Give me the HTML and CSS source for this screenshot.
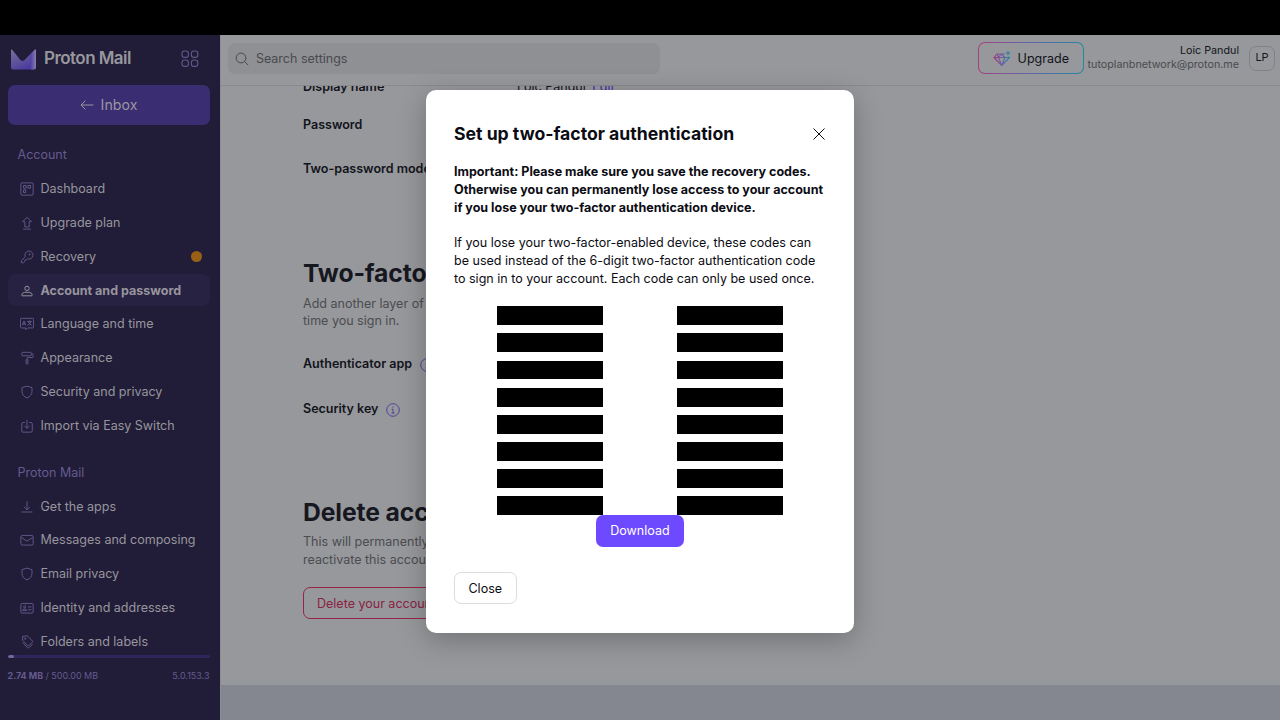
FILE: index.html
```html
<!DOCTYPE html>
<html lang="en">
<head>
<meta charset="utf-8">
<title>Account and password</title>
<link rel="stylesheet" href="styles.css">
</head>
<body>
<div class="topbar"></div>
<div class="app">
  <aside class="sidebar">
    <div class="brand">
      <svg class="logo" width="25" height="21" viewBox="0 0 25 21">
        <defs>
          <linearGradient id="lg1" x1="0" y1="0" x2="0.6" y2="1"><stop offset="0" stop-color="#77719a"/><stop offset="1" stop-color="#4b3a9e"/></linearGradient>
          <linearGradient id="lg2" x1="0" y1="0" x2="1" y2="0"><stop offset="0.2" stop-color="#5440a8"/><stop offset="1" stop-color="#8780a8"/></linearGradient>
        </defs>
        <path d="M0 1.2Q0 0 1 .6L9 10.500Q11 13 13.500 11L24 .6Q25 0 25 1.2V18.2Q25 20.4 22.8 20.4H2.2Q0 20.4 0 18.2Z" fill="url(#lg1)"/>
        <path d="M18.500 6L24 .6Q25 0 25 1.2V18.2Q25 20.4 22.8 20.4H19.500V6Z" fill="url(#lg2)"/>
      </svg>
      <span class="brand-name">Proton Mail</span>
      <svg class="apps" width="18" height="18" viewBox="0 0 18 18"><g fill="none" stroke="#625889" stroke-width="1.1"><rect x="1" y="1" width="6.4" height="6.4" rx="2.4"/><rect x="10.4" y="1" width="6.4" height="6.4" rx="2.4"/><rect x="1" y="10" width="6.4" height="6.4" rx="2.4"/><rect x="10.4" y="10" width="6.4" height="6.4" rx="2.4"/></g></svg>
    </div>
    <a class="inbox"><svg width="14" height="12" viewBox="0 0 14 12"><path d="M13.4 6H1M5.4 1.6L1 6l4.400 4.400"/></svg>Inbox</a>
    <nav class="nav">
      <div class="label">Account</div>
      <a class="item"><svg viewBox="0 0 16 16"><rect x="1" y="1" width="14" height="14" rx="1.200"/><rect x="4" y="4" width="3" height="3"/><rect x="9" y="4" width="3" height="3"/><rect x="4" y="9" width="2.600" height="3"/></svg><span>Dashboard</span></a>
      <a class="item"><svg viewBox="0 0 16 16"><path d="M8 1.500L13 6.500H10.500V12.500H5.500V6.500H3ZM3.500 15H12.500"/></svg><span>Upgrade plan</span></a>
      <a class="item"><svg viewBox="0 0 16 16"><path d="M6 7.600A4.600 4.600 0 1 1 8.600 10.100L7.200 11.400H5.700V12.900L3.900 14.600H1.500V12.200Z"/><circle cx="11" cy="5" r=".7"/></svg><span>Recovery</span><i class="dot"></i></a>
      <a class="item active"><svg viewBox="0 0 16 16"><circle cx="8" cy="5" r="2.500"/><path d="M5 9.500H11Q14 10.500 14 12.500Q14 13.500 13 13.500H3Q2 13.500 2 12.500Q2 10.500 5 9.500Z"/></svg><span>Account and password</span></a>
      <a class="item"><svg viewBox="0 0 16 16"><path d="M1.500 1.500H14.500Q15.500 1.500 15.500 2.500V11.500Q15.500 12.500 14.500 12.500H8.500L6.500 14.500V12.500H1.500Q.5 12.500.5 11.500V2.500Q.5 1.500 1.500 1.500ZM2.600 9.500L4.600 4.500L6.600 9.500M3.300 8H6M8.400 5.200H13.400M11 3.900V5.200M12.500 5.200Q11.800 8.300 8.600 9.500M9.500 5.200Q10.500 8.600 13.400 9.500"/></svg><span>Language and time</span></a>
      <a class="item"><svg viewBox="0 0 16 16"><rect x="2" y="1.500" width="11" height="4" rx="1.200"/><path d="M13 3H14Q15 3 15 4V6.500Q15 7.500 14 7.500H9Q8 7.500 8 8.500V10M7 10H9V14.500Q8 15.300 7 14.500Z"/></svg><span>Appearance</span></a>
      <a class="item"><svg viewBox="0 0 16 16"><path d="M8 1.300L13.700 3V7.300Q13.500 12.500 8 14.800Q2.500 12.500 2.300 7.300V3Z"/></svg><span>Security and privacy</span></a>
      <a class="item"><svg viewBox="0 0 16 16"><path d="M5.500 4H3.500Q2 4 2 5.500V13.500Q2 15 3.500 15H12.500Q14 15 14 13.500V5.500Q14 4 12.500 4H10.500M8 1V10.500M5 7.700L8 10.700L11 7.700"/></svg><span>Import via Easy Switch</span></a>
      <div class="label second">Proton Mail</div>
      <a class="item"><svg viewBox="0 0 16 16"><path d="M8 1.500V11M4.700 8L8 11.200L11.300 8M1.800 13.700H14.200"/></svg><span>Get the apps</span></a>
      <a class="item"><svg viewBox="0 0 16 16"><rect x="1" y="2.800" width="14" height="11" rx="1.500"/><path d="M1.500 5L7 8.800Q8 9.300 9 8.800L14.500 5"/></svg><span>Messages and composing</span></a>
      <a class="item"><svg viewBox="0 0 16 16"><path d="M8 1.300L13.700 3V7.300Q13.500 12.500 8 14.800Q2.500 12.500 2.300 7.300V3Z"/></svg><span>Email privacy</span></a>
      <a class="item"><svg viewBox="0 0 16 16"><rect x="1" y="2.800" width="14" height="11" rx="1.200"/><circle cx="5.300" cy="6.500" r="1.200"/><path d="M3 11Q3.200 9 5.300 9T7.500 11ZM9 6.800H13M9 10H13"/></svg><span>Identity and addresses</span></a>
      <a class="item"><svg viewBox="0 0 16 16"><path d="M3 1.500L8.500 1L14.300 7Q14.700 7.600 14.300 8.100L9.700 12.200Q9.200 12.600 8.700 12.100L3 6ZM3 8.500L8.700 14.700Q9.200 15.200 9.800 14.700L14.500 10.500"/><circle cx="6" cy="4.200" r=".8"/></svg><span>Folders and labels</span></a>
    </nav>
    <div class="meter"><i></i></div>
    <div class="usage"><span><b>2.74 MB</b> / 500.00 MB</span><span class="ver">5.0.153.3</span></div>
  </aside>
  <main class="main">
    <header class="header">
      <div class="search"><svg width="14" height="14" viewBox="0 0 14 14"><circle cx="6" cy="6" r="4.900"/><path d="M9.600 9.600L13.200 13.200"/></svg><span>Search settings</span></div>
      <div class="upgrade"><svg width="18" height="16" viewBox="0 0 18 16"><defs><linearGradient id="gem" gradientUnits="userSpaceOnUse" x1="1" y1="0" x2="17" y2="0"><stop offset="0" stop-color="#a0397c"/><stop offset=".5" stop-color="#6c60a4"/><stop offset="1" stop-color="#2187a3"/></linearGradient></defs><g fill="none" stroke="url(#gem)" stroke-width="1.100" stroke-linejoin="round"><path d="M12 3H4L1 6.500L8.700 14.500L16.500 6.500L15.800 5.500M1 6.500H16.500M4 3L5.500 6.500L8.700 14.500L12 6.500M5.500 6.500L8 3L12 6.500M15 0V4.200M12.900 2.100H17.100"/></g></svg><span>Upgrade</span></div>
      <div class="user"><div class="name">Loic Pandul</div><div class="mail">tutoplanbnetwork@proton.me</div></div>
      <div class="avatar">LP</div>
    </header>
    <div class="content">
      <div class="row"><b>Display name</b><span>Loic Pandul <em>Edit</em></span></div>
      <div class="row password"><b>Password</b></div>
      <div class="row mode"><b>Two-password mode</b></div>
      <h2>Two-factor authentication</h2>
      <p>Add another layer of<br>time you sign in.</p>
      <div class="row auth"><b>Authenticator app</b><svg class="info" viewBox="0 0 16 16"><circle cx="8" cy="8" r="7.200"/><path d="M6.500 7H8V11.500M6.300 11.500H9.800M7.900 4V5.300"/></svg></div>
      <div class="row key"><b>Security key</b><svg class="info" viewBox="0 0 16 16"><circle cx="8" cy="8" r="7.200"/><path d="M6.500 7H8V11.500M6.300 11.500H9.800M7.900 4V5.300"/></svg></div>
      <h2 class="delete-title">Delete account</h2>
      <p>This will permanently<br>reactivate this account.</p>
      <div class="danger">Delete your account</div>
    </div>
    <div class="strip"></div>
  </main>
</div>
<section class="modal">
  <div class="modal-head"><h1>Set up two-factor authentication</h1><svg width="14" height="14" viewBox="0 0 14 14"><path d="M1.500 1.500L12.500 12.500M12.500 1.500L1.500 12.500"/></svg></div>
  <p class="important">Important: Please make sure you save the recovery codes.<br>Otherwise you can permanently lose access to your account<br>if you lose your two-factor authentication device.</p>
  <p class="text">If you lose your two-factor-enabled device, these codes can<br>be used instead of the 6-digit two-factor authentication code<br>to sign in to your account. Each code can only be used once.</p>
  <div class="codes"><i></i><i></i><i></i><i></i><i></i><i></i><i></i><i></i><i></i><i></i><i></i><i></i><i></i><i></i><i></i><i></i></div>
  <div class="download">Download</div>
  <div class="close">Close</div>
</section>
</body>
</html>
```
FILE: styles.css
```css
* { box-sizing: border-box; }
body { margin: 0; width: 1280px; height: 720px; overflow: hidden; display: flex; flex-direction: column; background: #000; color: #12141b; font-family: Inter, "Liberation Sans", sans-serif; font-size: 12.530px; line-height: 17.900px; white-space: nowrap; }
svg { fill: none; flex: none; }
h1, h2, p { margin: 0; }
.topbar { height: 35px; flex: none; }
.app { flex: 1; min-height: 0; display: flex; }

.sidebar { width: 220px; flex: none; padding: 0 10.500px 0 7.500px; background: #211d38; color: #97959d; display: flex; flex-direction: column; }
.brand { height: 50px; flex: none; display: flex; align-items: center; padding: 0 11px 2px 3.500px; }
.brand-name { font-size: 17px; font-weight: 600; letter-spacing: -.55px; margin-left: 8px; color: #98979d; }
.apps { margin-left: auto; }
.inbox { height: 39.500px; flex: none; border-radius: 7px; background: #3b2d72; color: #98969f; display: flex; align-items: center; justify-content: center; gap: 7px; font-size: 14.200px; padding-top: 1px; }
.inbox svg { stroke: #98969f; stroke-width: 1; }
.nav { flex: 1; min-height: 0; overflow: hidden; }
.label { height: 48.500px; padding: 21.900px 0 0 10px; font-size: 12.530px; color: #645b8e; }
.label.second { margin-top: -1.700px; }
.item { height: 31.400px; margin-bottom: 2.430px; padding: 1px 8px 0 12px; border-radius: 7px; display: flex; align-items: center; gap: 7px; font-size: 12.530px; }
.item svg { width: 14px; height: 14px; stroke: #625889; stroke-width: 1.100; stroke-linejoin: round; }
.item.active { background: #272142; font-weight: 700; }
.item.active svg { stroke: #98969f; }
.dot { width: 11px; height: 11px; border-radius: 50%; background: #986014; margin-left: auto; }
.meter { height: 3.500px; border-radius: 2px; background: #30265c; flex: none; overflow: hidden; }
.meter i { display: block; width: 6px; height: 100%; border-radius: 2px; background: #716798; }
.usage { height: 62px; flex: none; display: flex; justify-content: space-between; padding-top: 8.500px; font-size: 8.980px; color: #645b8e; }

.main { flex: 1; min-width: 0; background: #97989b; border-left: 1px solid #8c8d96; display: flex; flex-direction: column; }
.header { height: 50.500px; flex: none; border-bottom: 1px solid #898a8e; display: flex; align-items: center; padding: 0 5px 3px 6.500px; }
.search { width: 432.500px; height: 31.500px; border-radius: 7px; background: #8f9093; color: #494a4f; display: flex; align-items: center; gap: 7px; padding: 1px 0 0 7.400px; font-size: 12.530px; }
.search svg { stroke: #494a4f; stroke-width: 1; }
.upgrade { width: 105.500px; height: 32px; margin-left: auto; border: 1px solid transparent; border-radius: 7px; background: linear-gradient(#97989b, #97989b) padding-box, linear-gradient(90deg, #a6407f, #6c60a4 40%, #2187a3) border-box; display: flex; align-items: center; gap: 7px; padding: 1px 0 0 13.500px; font-size: 12.530px; }
.user { margin-left: 4px; text-align: right; font-size: 10.740px; line-height: 14.500px; }
.mail { color: #494a4f; }
.avatar { width: 26px; height: 25.500px; margin-left: 10px; border: 1px solid #818286; border-radius: 7px; display: flex; align-items: center; justify-content: center; font-size: 11px; }
.content { height: 599.500px; flex: none; overflow: hidden; padding: 0 0 0 82px; }
.row { height: 18px; display: flex; align-items: center; }
.row b { font-weight: 600; }
.content > .row:first-child { margin-top: -8px; }
.row:first-child b { width: 214px; }
.row em { font-style: normal; color: #442bab; text-decoration: underline; margin-left: 3px; }
.row.password { margin-top: 20px; }
.row.mode { margin-top: 26px; }
h2 { font-size: 24.700px; line-height: 32px; font-weight: 700; letter-spacing: -.1px; color: #16171f; margin-top: 79.500px; }
.content p { color: #4b4c51; margin-top: 5.500px; }
.row.auth { margin-top: 25px; }
.row.key { margin-top: 26.500px; }
.info { width: 14px; height: 14px; margin: 2px 0 0 8px; stroke: #4d3e9c; stroke-width: 1.100; }
h2.delete-title { margin-top: 78px; }
.danger { width: 150px; height: 32px; margin-top: 17.500px; border: 1px solid #962545; border-radius: 7px; color: #892343; padding: 0 13px; line-height: 31px; }
.strip { flex: 1; background: #84878f; }

.modal { position: absolute; left: 425.500px; top: 89.700px; width: 428.900px; height: 543px; padding: 30px 28.500px 28px; border-radius: 10px; background: #fff; color: #0c0c14; box-shadow: 0 7px 28px rgba(0, 0, 0, .25); }
.modal-head { height: 29px; display: flex; align-items: center; justify-content: space-between; }
.modal-head svg { stroke: #0c0c14; stroke-width: 1; }
h1 { font-size: 17.620px; line-height: 24px; font-weight: 700; }
.important { margin-top: 14px; font-weight: 700; }
.text { margin-top: 17.500px; }
.codes { display: grid; grid-template-columns: 106px 106px; column-gap: 73.500px; row-gap: 8.300px; justify-content: center; margin-top: 18.500px; }
.codes i { height: 18.900px; background: #000; }
.download { width: 88px; height: 32px; margin: 0 auto; border-radius: 7px; background: #6d4aff; color: #fff; text-align: center; line-height: 32px; }
.close { width: 62.500px; height: 32px; margin-top: 25px; border: 1px solid #dcdcde; border-radius: 7px; text-align: center; line-height: 31px; }
```
